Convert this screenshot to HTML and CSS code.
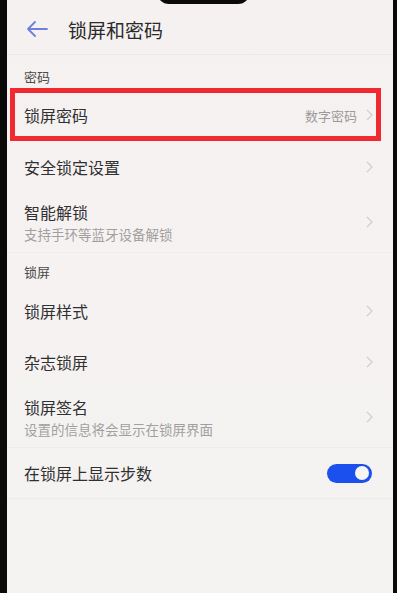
FILE: index.html
```html
<!DOCTYPE html>
<html lang="zh-CN">
<head>
    <meta charset="UTF-8">
    <meta name="viewport" content="width=device-width, initial-scale=1.0">
    <title>锁屏和密码</title>
    <link rel="stylesheet" href="styles.css">
</head>
<body>
    <div class="screen">
        <div class="notch"></div>

        <div class="header">
            <svg class="back" width="22" height="16" viewBox="0 0 22 16">
                <path d="M21 8H2M9 1L2 8l7 7" fill="none" stroke="#6f80d8" stroke-width="1.8" stroke-linecap="round" stroke-linejoin="round"/>
            </svg>
            <span class="title">锁屏和密码</span>
        </div>

        <div class="section first">密码</div>

        <div class="row highlighted">
            <span class="label">锁屏密码</span>
            <span class="value">数字密码</span>
            <svg class="chevron" width="7" height="12" viewBox="0 0 7 12"><path d="M1 1l5 5-5 5" fill="none" stroke="#d2d0cf" stroke-width="1.3"/></svg>
            <div class="mark"></div>
        </div>

        <div class="row">
            <span class="label">安全锁定设置</span>
            <svg class="chevron" width="7" height="12" viewBox="0 0 7 12"><path d="M1 1l5 5-5 5" fill="none" stroke="#d2d0cf" stroke-width="1.3"/></svg>
        </div>

        <div class="row tall">
            <div class="texts">
                <span class="label">智能解锁</span>
                <span class="sub">支持手环等蓝牙设备解锁</span>
            </div>
            <svg class="chevron" width="7" height="12" viewBox="0 0 7 12"><path d="M1 1l5 5-5 5" fill="none" stroke="#d2d0cf" stroke-width="1.3"/></svg>
        </div>

        <div class="section">锁屏</div>

        <div class="row">
            <span class="label">锁屏样式</span>
            <svg class="chevron" width="7" height="12" viewBox="0 0 7 12"><path d="M1 1l5 5-5 5" fill="none" stroke="#d2d0cf" stroke-width="1.3"/></svg>
        </div>

        <div class="row">
            <span class="label">杂志锁屏</span>
            <svg class="chevron" width="7" height="12" viewBox="0 0 7 12"><path d="M1 1l5 5-5 5" fill="none" stroke="#d2d0cf" stroke-width="1.3"/></svg>
        </div>

        <div class="row tall">
            <div class="texts">
                <span class="label">锁屏签名</span>
                <span class="sub">设置的信息将会显示在锁屏界面</span>
            </div>
            <svg class="chevron" width="7" height="12" viewBox="0 0 7 12"><path d="M1 1l5 5-5 5" fill="none" stroke="#d2d0cf" stroke-width="1.3"/></svg>
        </div>

        <div class="row last">
            <span class="label">在锁屏上显示步数</span>
            <div class="toggle"><div class="knob"></div></div>
        </div>
    </div>
</body>
</html>
```

FILE: styles.css
```css
:root {
    --text-color: #303030;
    --sub-color: #a2a09f;
    --accent: #1c50ee;
}

html, body {
    margin: 0;
    height: 100%;
}

body {
    background: #0a0a0a;
    font-family: "Noto Sans CJK SC", "Noto Sans", sans-serif;
    color: var(--text-color);
}

.screen {
    position: relative;
    margin: 0 4px 0 7px;
    height: 593px;
    background: linear-gradient(#f6f1f1, #f4f3f1);
    display: flex;
    flex-direction: column;
    overflow: hidden;
}

.notch {
    position: absolute;
    top: -14px;
    left: 150px;
    width: 93px;
    height: 18px;
    background: #0a0a0a;
    border-radius: 0 0 12px 12px;
}

.header {
    height: 55px;
    display: flex;
    align-items: center;
    padding: 4px 0 0 19px;
    box-sizing: border-box;
    border-bottom: 1px solid #ebe7e6;
}

.back {
    margin-right: 20px;
}

.title {
    font-size: 19px;
    color: #2a2a2a;
}

.section {
    display: flex;
    align-items: center;
    padding: 0 17px;
    font-size: 13px;
    color: #4a4a4a;
    flex-shrink: 0;
}

.section.first {
    height: 34px;
    padding-top: 8px;
    box-sizing: border-box;
}

.section:not(.first) {
    height: 28px;
    padding-top: 4px;
    border-top: 1px solid #f0eded;
}

.row {
    position: relative;
    height: 51px;
    display: flex;
    align-items: center;
    padding: 0 20px 0 17px;
    flex-shrink: 0;
}

.highlighted {
    height: 52px;
}

.row.tall {
    height: 60px;
}

.texts {
    display: flex;
    flex-direction: column;
}

.label {
    font-size: 16px;
    line-height: 22px;
    flex: 1;
}

.sub {
    font-size: 13.5px;
    line-height: 20px;
    color: var(--sub-color);
    margin-top: 1px;
}

.texts + .chevron {
    margin-left: auto;
}

.value {
    font-size: 13px;
    color: #9c9a99;
    margin-right: 9px;
}

.chevron {
    flex-shrink: 0;
}

.row.last {
    height: 50px;
    border-top: 1px solid #eeecea;
    border-bottom: 1px solid #eeecea;
    padding-right: 21px;
}

.toggle {
    width: 45px;
    height: 19px;
    border-radius: 10px;
    background: var(--accent);
    display: flex;
    align-items: center;
    justify-content: flex-end;
    padding: 0 3px;
    box-sizing: border-box;
}

.knob {
    width: 14px;
    height: 14px;
    border-radius: 50%;
    background: #f8f6f2;
}

.mark {
    position: absolute;
    top: -1px;
    left: 3px;
    right: 12px;
    bottom: 0;
    border: 5px solid #f02a2e;
}
```
